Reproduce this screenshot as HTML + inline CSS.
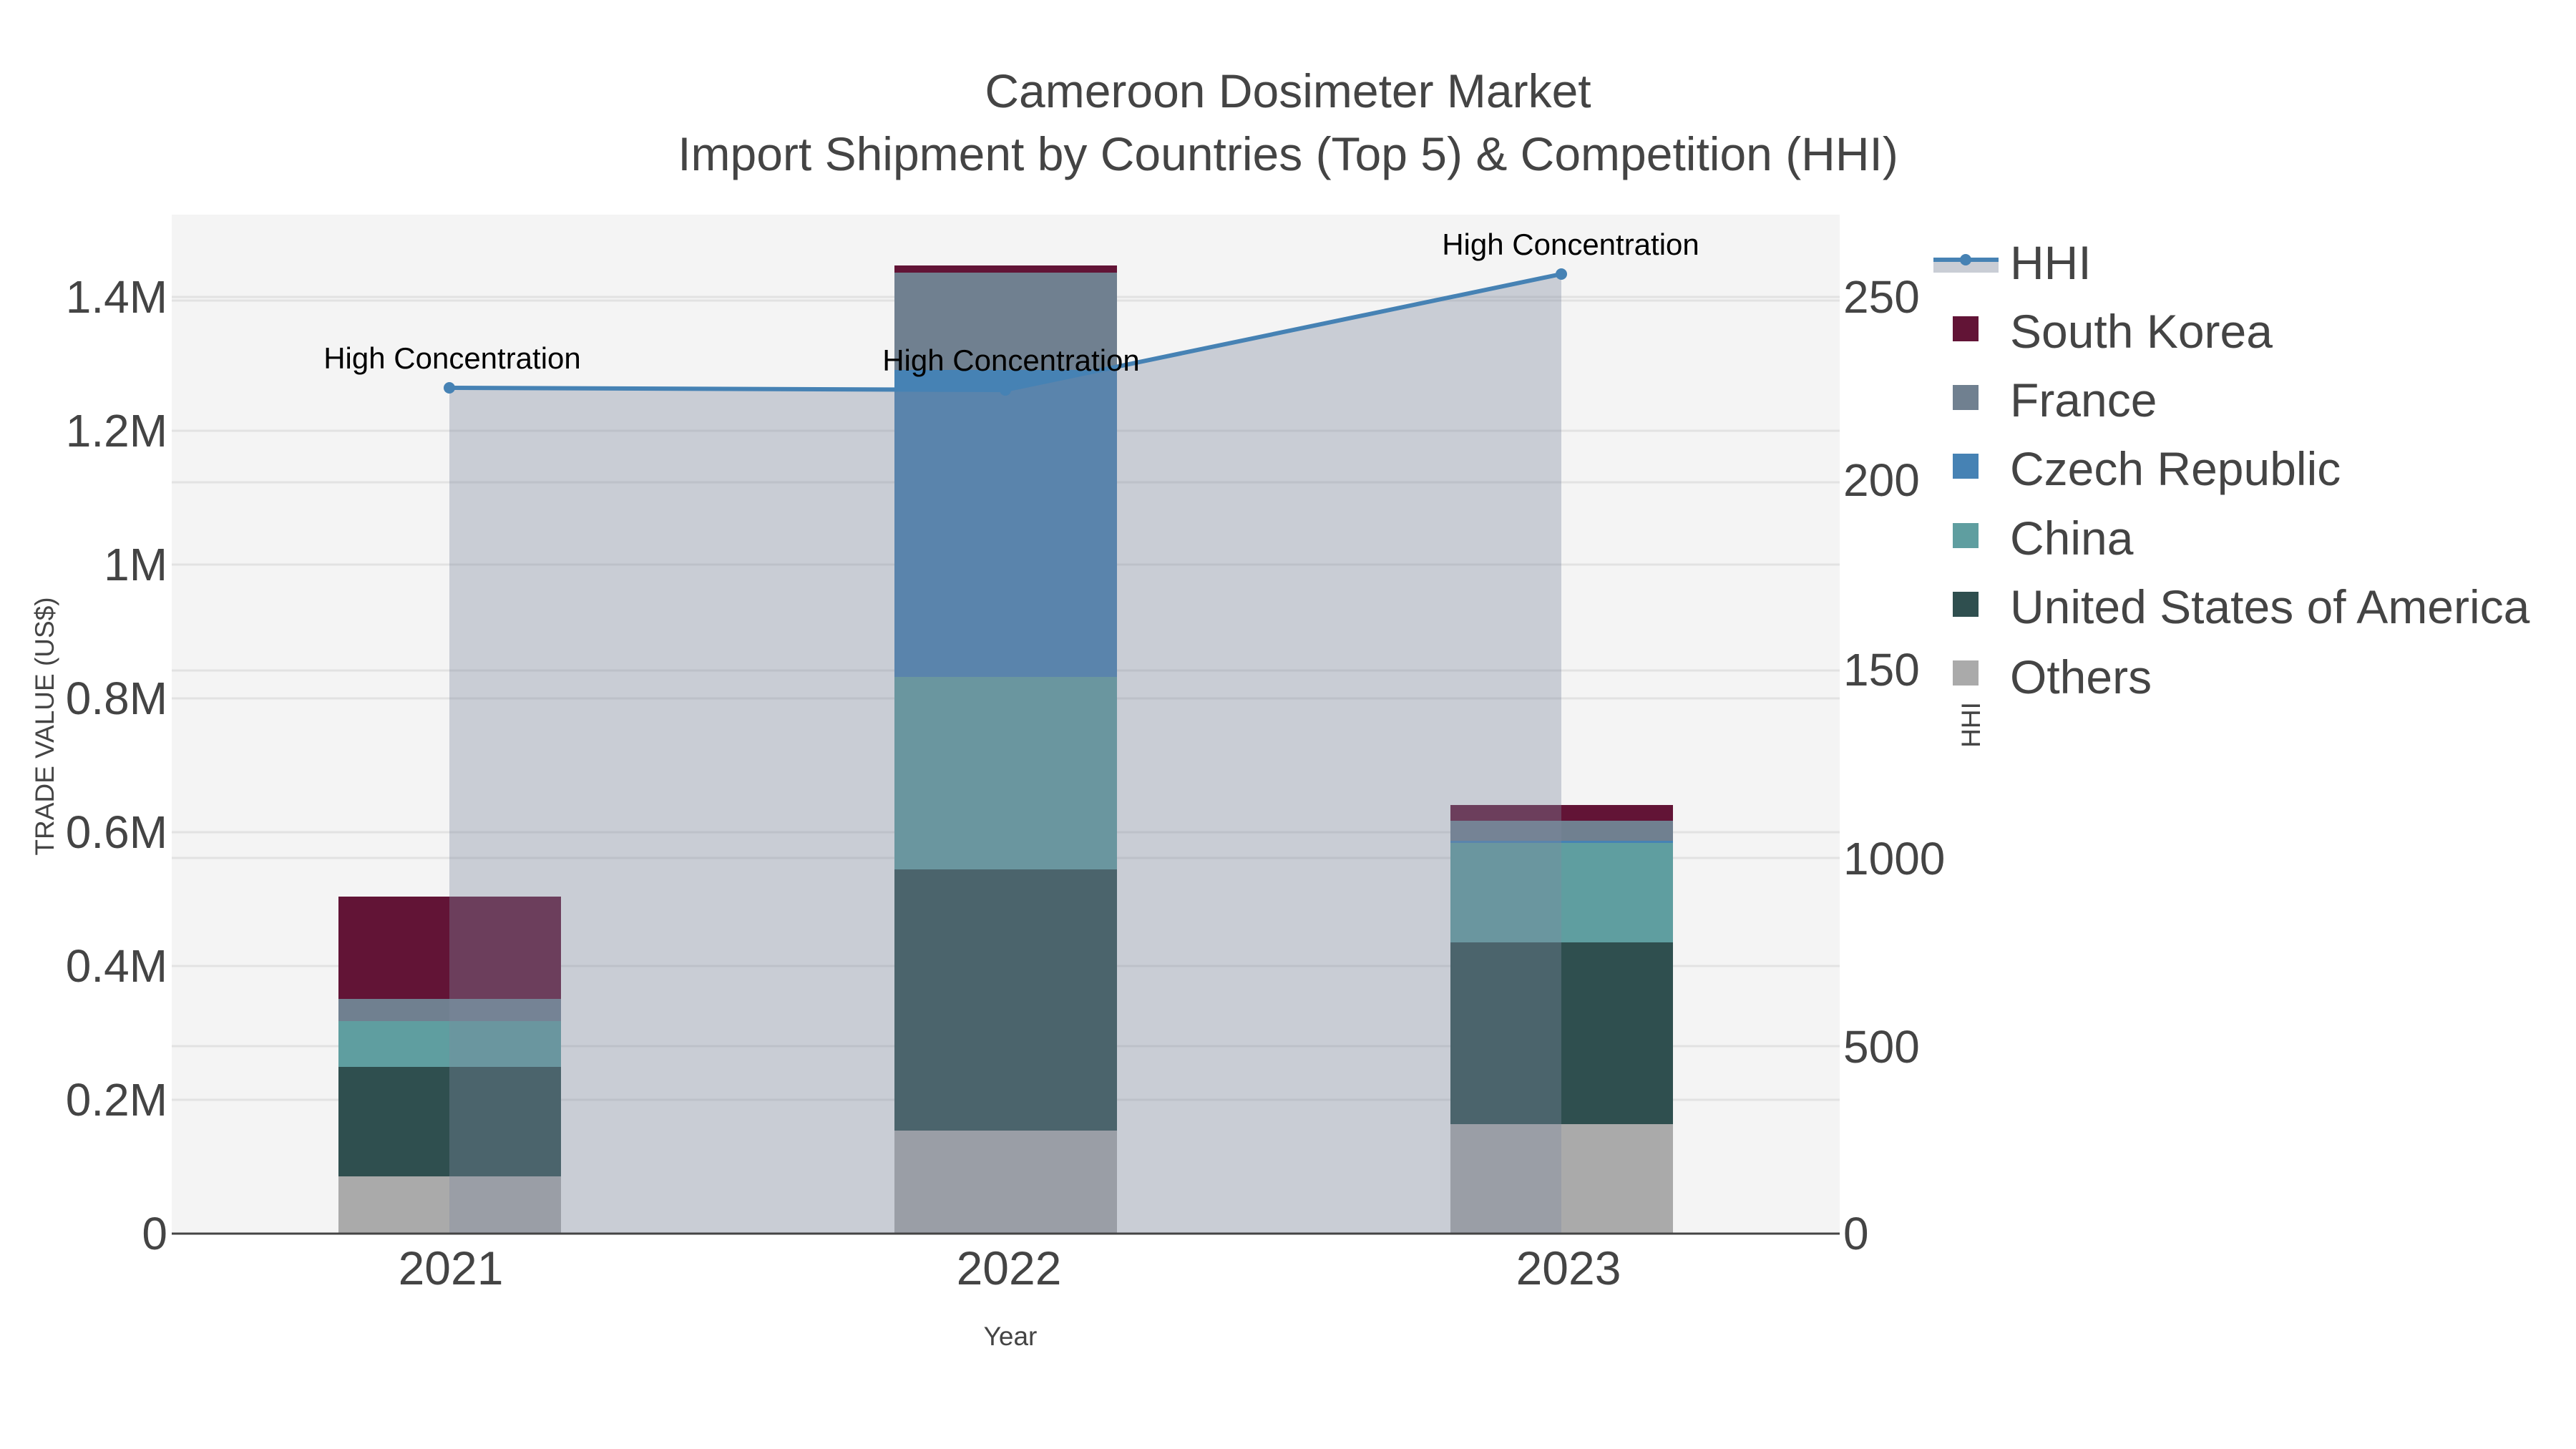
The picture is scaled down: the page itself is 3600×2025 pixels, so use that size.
<!DOCTYPE html>
<html><head><meta charset="utf-8"><style>
html,body{margin:0;padding:0;background:#fff;}
svg{display:block;font-family:"Liberation Sans",sans-serif;}
</style></head><body>
<svg width="3600" height="2025" viewBox="0 0 3600 2025" xmlns="http://www.w3.org/2000/svg">
<rect width="3600" height="2025" fill="#fff"/>
<rect x="240" y="300" width="2331" height="1424" fill="#f4f4f4"/>
<g stroke="#e2e2e2" stroke-width="3">
<line x1="240" x2="2571" y1="415" y2="415"/>
<line x1="240" x2="2571" y1="602" y2="602"/>
<line x1="240" x2="2571" y1="789" y2="789"/>
<line x1="240" x2="2571" y1="976" y2="976"/>
<line x1="240" x2="2571" y1="1163" y2="1163"/>
<line x1="240" x2="2571" y1="1350" y2="1350"/>
<line x1="240" x2="2571" y1="1537" y2="1537"/>
<line x1="240" x2="2571" y1="420" y2="420"/>
<line x1="240" x2="2571" y1="674" y2="674"/>
<line x1="240" x2="2571" y1="937" y2="937"/>
<line x1="240" x2="2571" y1="1199" y2="1199"/>
<line x1="240" x2="2571" y1="1462" y2="1462"/>
</g>
<rect x="473" y="1644" width="311" height="80" fill="#aaaaaa"/>
<rect x="473" y="1491" width="311" height="153" fill="#2f4f4f"/>
<rect x="473" y="1427" width="311" height="64" fill="#5f9ea0"/>
<rect x="473" y="1396" width="311" height="31" fill="#708090"/>
<rect x="473" y="1253" width="311" height="143" fill="#621436"/>
<rect x="1250" y="1580" width="311" height="144" fill="#aaaaaa"/>
<rect x="1250" y="1215" width="311" height="365" fill="#2f4f4f"/>
<rect x="1250" y="946" width="311" height="269" fill="#5f9ea0"/>
<rect x="1250" y="517" width="311" height="429" fill="#4682b4"/>
<rect x="1250" y="381" width="311" height="136" fill="#708090"/>
<rect x="1250" y="371" width="311" height="10" fill="#621436"/>
<rect x="2027" y="1571" width="311" height="153" fill="#aaaaaa"/>
<rect x="2027" y="1317" width="311" height="254" fill="#2f4f4f"/>
<rect x="2027" y="1178" width="311" height="139" fill="#5f9ea0"/>
<rect x="2027" y="1175" width="311" height="3" fill="#4682b4"/>
<rect x="2027" y="1147" width="311" height="28" fill="#708090"/>
<rect x="2027" y="1125" width="311" height="22" fill="#621436"/>
<polygon points="628,542 1405,545 2182,383 2182,1724 628,1724" fill="rgb(126,137,159)" fill-opacity="0.365"/>
<polyline points="628,542 1405,545 2182,383" fill="none" stroke="#4682b4" stroke-width="6"/>
<circle cx="628" cy="542" r="8" fill="#4682b4"/>
<circle cx="1405" cy="545" r="8" fill="#4682b4"/>
<circle cx="2182" cy="383" r="8" fill="#4682b4"/>
<line x1="240" x2="2571" y1="1724" y2="1724" stroke="#444" stroke-width="3"/>
<g font-size="42" fill="#000" text-anchor="middle">
<text x="632" y="515">High Concentration</text>
<text x="1413" y="518">High Concentration</text>
<text x="2195" y="356">High Concentration</text>
</g>
<g fill="#444" text-anchor="middle" font-size="66">
<text x="1800" y="150">Cameroon Dosimeter Market</text>
<text x="1800" y="238">Import Shipment by Countries (Top 5) &amp; Competition (HHI)</text>
</g>
<g fill="#444" font-size="64" text-anchor="end">
<text x="234" y="437">1.4M</text>
<text x="234" y="624">1.2M</text>
<text x="234" y="811">1M</text>
<text x="234" y="998">0.8M</text>
<text x="234" y="1185">0.6M</text>
<text x="234" y="1372">0.4M</text>
<text x="234" y="1559">0.2M</text>
<text x="234" y="1746">0</text>
</g>
<g fill="#444" font-size="64">
<text x="2576" y="437">250</text>
<text x="2576" y="693">200</text>
<text x="2576" y="958">150</text>
<text x="2576" y="1222">1000</text>
<text x="2576" y="1485">500</text>
<text x="2576" y="1746">0</text>
</g>
<g fill="#444" font-size="66" text-anchor="middle">
<text x="630" y="1795">2021</text>
<text x="1410" y="1795">2022</text>
<text x="2192" y="1795">2023</text>
</g>
<text x="1412" y="1880" fill="#444" font-size="37" text-anchor="middle">Year</text>
<text transform="translate(75,1015) rotate(-90)" fill="#444" font-size="37" text-anchor="middle">TRADE VALUE (US$)</text>
<text transform="translate(2767,1013) rotate(-90)" fill="#444" font-size="37" text-anchor="middle">HHI</text>
<rect x="2702" y="364" width="91" height="17" fill="#c9cdd5"/>
<line x1="2702" x2="2793" y1="363" y2="363" stroke="#4682b4" stroke-width="6"/>
<circle cx="2747" cy="363" r="8" fill="#4682b4"/>
<rect x="2729" y="442" width="36" height="35" fill="#621436"/>
<rect x="2729" y="538" width="36" height="35" fill="#708090"/>
<rect x="2729" y="634" width="36" height="35" fill="#4682b4"/>
<rect x="2729" y="731" width="36" height="35" fill="#5f9ea0"/>
<rect x="2729" y="827" width="36" height="35" fill="#2f4f4f"/>
<rect x="2729" y="923" width="36" height="35" fill="#aaaaaa"/>
<g fill="#444" font-size="66">
<text x="2809" y="390">HHI</text>
<text x="2809" y="486">South Korea</text>
<text x="2809" y="582">France</text>
<text x="2809" y="678">Czech Republic</text>
<text x="2809" y="775">China</text>
<text x="2809" y="871">United States of America</text>
<text x="2809" y="969">Others</text>
</g>
</svg>
</body></html>
